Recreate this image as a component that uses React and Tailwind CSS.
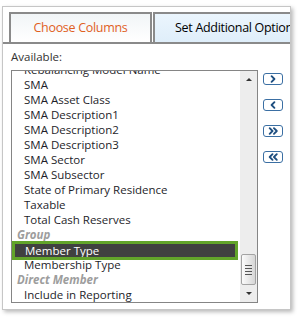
import React from "react";

const rows = [
  { label: "Rebalancing Model Name" },
  { label: "SMA" },
  { label: "SMA Asset Class" },
  { label: "SMA Description1" },
  { label: "SMA Description2" },
  { label: "SMA Description3" },
  { label: "SMA Sector" },
  { label: "SMA Subsector" },
  { label: "State of Primary Residence" },
  { label: "Taxable" },
  { label: "Total Cash Reserves" },
  { label: "Group", group: true },
  { label: "Member Type", selected: true },
  { label: "Membership Type" },
  { label: "Direct Member", group: true },
  { label: "Include in Reporting" },
];

function Chevrons({ dir, double }) {
  const one = dir === "right" ? "M8 3 L11 6 L8 9" : "M11 3 L8 6 L11 9";
  const a = dir === "right" ? "M6 3 L9 6 L6 9" : "M9 3 L6 6 L9 9";
  const b = dir === "right" ? "M10.5 3 L13.5 6 L10.5 9" : "M13.5 3 L10.5 6 L13.5 9";
  return (
    <svg width="18" height="10" viewBox="0 1 19 10" fill="none" stroke="#1f4f80" strokeWidth="2" strokeLinecap="round" strokeLinejoin="round">
      {double ? (
        <>
          <path d={a} />
          <path d={b} />
        </>
      ) : (
        <path d={one} />
      )}
    </svg>
  );
}

function MoveButton(props) {
  return (
    <button className="flex h-[12px] w-[20px] items-center justify-center rounded-[3px] border-[1.5px] border-[#3b6fa3] bg-white p-0">
      <Chevrons {...props} />
    </button>
  );
}

export default function App() {
  return (
    <div className="relative h-[319px] w-[301px] overflow-hidden bg-white font-['Open_Sans',sans-serif]">
      <div className="ml-[2px] mt-[6px] h-[304px] w-[289px] overflow-hidden border border-[#c6c6c6] bg-white shadow-[2px_2px_4px_rgba(0,0,0,0.28)]">
        {/* tabs */}
        <div className="flex gap-[1px] border-b-2 border-[#8a8a8a] pl-[6px] pt-[5px]">
          <div className="flex h-[30px] w-[143px] shrink-0 items-center justify-center border-2 border-b-0 border-[#8a8a8a] bg-gradient-to-b from-[#f1f5f7] to-white text-[12.5px] tracking-[-0.3px] text-[#e0601e]">
            Choose Columns
          </div>
          <div className="flex h-[30px] w-[160px] shrink-0 items-center whitespace-nowrap border-2 border-b-0 border-[#8a8a8a] bg-gradient-to-b from-[#ebf5fd] to-[#dfeefa] pl-[20px] text-[12.5px] tracking-[-0.3px] text-black">
            Set Additional Options
          </div>
        </div>

        <div className="pl-[8px] pt-[5px] text-[11.5px] leading-[16px] text-[#333]">Available:</div>

        <div className="mt-[5px] flex pl-[8px]">
          {/* list box */}
          <div className="flex h-[233px] w-[247px] border border-[#858585] bg-white">
            <div className="flex-1 overflow-hidden">
              <div className="-mt-[9px]">
                {rows.map((r) =>
                  r.selected ? (
                    <div key={r.label} className="h-[15px] pt-[2px]">
                      <div className="relative z-10 ml-[3px] mr-[5px] h-[13px] whitespace-nowrap bg-[#404040] pl-[10px] text-[11.5px] leading-[13px] text-white outline-3 outline-[#62a42a]">
                        {r.label}
                      </div>
                    </div>
                  ) : r.group ? (
                    <div key={r.label} className="h-[15px] whitespace-nowrap pl-[5px] text-[11.5px] font-bold italic leading-[15px] text-[#9d9d9d]">
                      {r.label}
                    </div>
                  ) : (
                    <div key={r.label} className="h-[15px] whitespace-nowrap pl-[12px] text-[11.5px] leading-[15px] text-[#1e1e2a]">
                      {r.label}
                    </div>
                  )
                )}
              </div>
            </div>
            {/* scrollbar */}
            <div className="flex w-[17px] flex-col bg-[#ededed]">
              <div className="flex h-[17px] items-center justify-center">
                <div className="h-0 w-0 border-x-[3px] border-b-[3px] border-x-transparent border-b-[#333]" />
              </div>
              <div className="flex-1" />
              <div className="mx-[1px] flex h-[31px] flex-col items-center justify-center gap-[2px] rounded-[2px] border border-[#a3a3a3] bg-gradient-to-r from-[#fbfbfb] to-[#d6d6d6]">
                <div className="h-px w-[7px] bg-[#555]" />
                <div className="h-px w-[7px] bg-[#555]" />
                <div className="h-px w-[7px] bg-[#555]" />
                <div className="h-px w-[7px] bg-[#555]" />
              </div>
              <div className="flex h-[17px] items-center justify-center">
                <div className="h-0 w-0 border-x-[3px] border-t-[3px] border-x-transparent border-t-[#333]" />
              </div>
            </div>
          </div>

          {/* move buttons */}
          <div className="ml-[5px] mt-[3px] flex flex-col gap-[14px]">
            <MoveButton dir="right" />
            <MoveButton dir="left" />
            <MoveButton dir="right" double />
            <MoveButton dir="left" double />
          </div>
        </div>
      </div>
    </div>
  );
}
